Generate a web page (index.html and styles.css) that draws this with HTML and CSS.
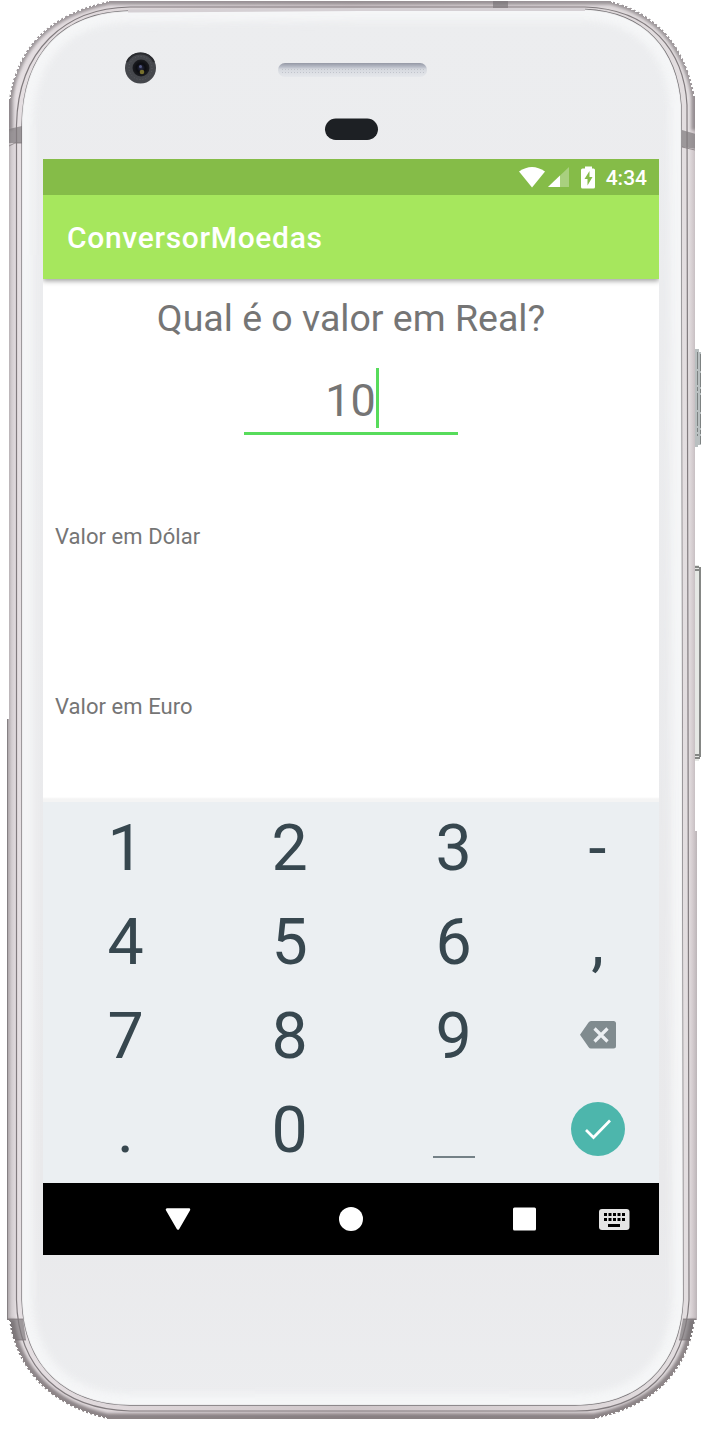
FILE: index.html
```
<!DOCTYPE html>
<html lang="pt-BR">
<head>
<meta charset="utf-8">
<title>ConversorMoedas</title>
<link rel="stylesheet" href="styles.css">
</head>
<body>
<div class="phone">
  <svg class="phone-body" width="705" height="1429" viewBox="0 0 705 1429" aria-hidden="true">
    <defs>
      <linearGradient id="metal" x1="7" x2="697" y1="0" y2="0" gradientUnits="userSpaceOnUse">
        <stop offset="0" stop-color="#a59fa2"/><stop offset=".007" stop-color="#d3cdd0"/><stop offset=".014" stop-color="#e5dfe2"/>
        <stop offset=".5" stop-color="#cfc6c9"/><stop offset=".988" stop-color="#e3dee0"/><stop offset=".994" stop-color="#d3cbce"/><stop offset="1" stop-color="#bcb5b8"/>
      </linearGradient>
      <linearGradient id="face" x1="0" x2="0" y1="0" y2="1">
        <stop offset="0" stop-color="#ecedef"/><stop offset=".85" stop-color="#e9e9eb"/><stop offset="1" stop-color="#ecedef"/>
      </linearGradient>
      <linearGradient id="slot" x1="0" x2="0" y1="0" y2="1">
        <stop offset="0" stop-color="#9498a5"/><stop offset=".28" stop-color="#b9bdc8"/><stop offset=".45" stop-color="#d6d9df"/><stop offset="1" stop-color="#e6e8ec"/>
      </linearGradient>
      <pattern id="mesh" width="3" height="3" patternUnits="userSpaceOnUse"><path d="M0 0h1v1h-1z" fill="#b5bac2" opacity=".7"/></pattern>
      <radialGradient id="lens"><stop offset="0" stop-color="#2b2d48"/><stop offset=".5" stop-color="#0c0d12"/><stop offset="1" stop-color="#1b1c20"/></radialGradient>
      <filter id="soft" x="-5%" y="-5%" width="110%" height="110%"><feGaussianBlur stdDeviation="4"/></filter>
      <filter id="rimsoft" x="-5%" y="-5%" width="110%" height="110%"><feGaussianBlur stdDeviation="1.6"/></filter>
      <path id="shell" d="M109 1H611C660 14 686 48 695 97V831H697V1320H695C688 1372 655 1406 595 1419H107C50 1406 16 1370 9 1320H7V719H9V99C17 48 47 14 109 1Z"/>
      <path id="glass" d="M130 11C200 9.500 500 9 585 9.500C645 12 677 50 681 105L683 1300C680 1368 638 1405 575 1405H130C66 1404 24 1367 22 1300V125C23 52 64 12 130 11Z"/>
      <clipPath id="shellclip"><use href="#shell"/></clipPath>
      <clipPath id="glassclip"><use href="#glass"/></clipPath>
    </defs>
    <g shape-rendering="crispEdges">
      <path d="M695 349h4v3h2v93h-3v2h-3z" fill="#b9bfc0"/>
      <path d="M697.500 352v84M700.500 354v90" stroke="#7d8282" stroke-dasharray="17 2 14 2 4 2"/>
      <path d="M695 565h4v2h2v190h-2v4h-4z" fill="#e5e7e4"/>
      <path d="M695 566.500h4M695 569.500h4M695 754.500h4M695 757.500h5M700 567v190" stroke="#858785" stroke-width="2"/>
      <use href="#shell" fill="url(#metal)"/>
    </g>
    <g clip-path="url(#shellclip)">
      <path d="M9 130V99C17 48 47 14 109 1H611C660 14 686 48 695 97V130" fill="none" stroke="#777174" stroke-width="7" opacity=".65" filter="url(#rimsoft)"/>
      <path d="M9 1320C16 1370 50 1406 107 1419H595C655 1406 688 1372 695 1320" fill="none" stroke="#70676b" stroke-width="11" opacity=".75" filter="url(#rimsoft)"/>
      <path d="M7.500 719V1320" stroke="#858083"/>
      <path d="M9 129L22 126V143H9zM682 130L696 134V149L682 147zM493 1H508V9H493zM8 1319H23L26 1340H9zM683 1319H696V1340H679z" fill="#777174" opacity=".65"/>
      <path d="M22 143H15L9 146M682 147L695 150M8 1319H23M11 1340H26M683 1319H696M679 1340H693" stroke="#777174" fill="none" opacity=".7"/>
    </g>
    <path d="M9 99C17 48 47 14 109 1M611 1C660 14 686 48 695 97M695 1320C688 1372 655 1406 595 1419M107 1419C50 1406 16 1370 9 1320" fill="none" stroke="#fff" stroke-width="2.500" stroke-dasharray="2.200 2.200" shape-rendering="crispEdges"/>
    <path d="M130 7H585C650 9 684 50 687 105L689 1300C685 1370 642 1411 575 1411H130C63 1409 18 1370 16.500 1300V125C18 50 65 8 130 7Z" fill="none" stroke="#817b7e" stroke-width="1.200"/>
    <use href="#glass" fill="url(#face)" stroke="#777477" stroke-width="1.300"/>
    <g clip-path="url(#glassclip)"><use href="#glass" fill="none" stroke="#f6f7f8" stroke-width="22" opacity=".9" filter="url(#soft)"/></g>
    <path d="M128 11C200 9.500 500 9 585 9.500" stroke="#d5d0d4" stroke-width="3" fill="none"/>
    <circle cx="140.500" cy="68" r="15.500" fill="#45474c"/>
    <path d="M127 62A15 15 0 0 1 154 62" stroke="#2b2c30" stroke-width="2" fill="none"/>
    <circle cx="140.500" cy="68" r="11.500" fill="none" stroke="#5b5d62" stroke-dasharray="1 2"/>
    <circle cx="141" cy="68" r="8.500" fill="url(#lens)"/>
    <circle cx="140.500" cy="66.500" r="1.500" fill="#555b86"/>
    <circle cx="142" cy="72" r="2.300" fill="#77702e"/>
    <rect x="278" y="63" width="149" height="14" rx="7" fill="url(#slot)"/>
    <rect x="280" y="67" width="145" height="8" rx="4" fill="url(#mesh)"/>
    <rect x="325" y="118.500" width="53" height="21.500" rx="10.750" fill="#1d2024"/>
  </svg>

  <main class="screen">
    <div class="status">
      <svg class="status-icons" width="84" height="24" viewBox="0 0 84 24">
        <path d="M1 5.500Q14-3.500 27 5.500L14 21.500Z" fill="#fff"/>
        <path d="M51 1V21H30Z" fill="#fff" opacity=".3"/>
        <path d="M42 9.500V21H30Z" fill="#fff"/>
        <path d="M67 0.500h7v2h1.500q1.500 0 1.500 1.500v17q0 1.500-1.500 1.500h-11q-1.500 0-1.500-1.500v-17q0-1.500 1.500-1.500h2.500z" fill="#fff"/>
        <path d="M71.500 5l-5 8h3v6.500l5-8.500h-3z" fill="#85bc48"/>
      </svg>
      <span class="clock">4:34</span>
    </div>
    <header class="appbar">ConversorMoedas</header>
    <section class="content">
      <h1 class="question">Qual é o valor em Real?</h1>
      <div class="field"><span class="value">10</span><i class="caret"></i></div>
      <p class="label label-dollar">Valor em Dólar</p>
      <p class="label label-euro">Valor em Euro</p>
    </section>
    <section class="keypad">
      <span>1</span><span>2</span><span>3</span><span>-</span>
      <span>4</span><span>5</span><span>6</span><span>,</span>
      <span>7</span><span>8</span><span>9</span>
      <span class="icon-key"><svg width="36" height="28" viewBox="0 0 36 28"><path d="M11 0H33.500Q36 0 36 2.500V25Q36 27.500 33.500 27.500H11Q9.500 27.500 8.500 26L0 13.750L8.500 1.500Q9.500 0 11 0Z" fill="#808b8f"/><path d="M14.500 7.500L27.500 20.500M27.500 7.500L14.500 20.500" stroke="#ebeff2" stroke-width="3.200"/></svg></span>
      <span>.</span><span>0</span><span><i class="space"></i></span>
      <span class="icon-key"><svg width="54" height="54" viewBox="0 0 54 54"><circle cx="27" cy="27" r="27" fill="#4db6ac"/><path d="M15 28L22.500 35.500L39 18.500" stroke="#fff" stroke-width="2.700" fill="none"/></svg></span>
    </section>
    <nav class="navbar">
      <svg width="616" height="72" viewBox="0 0 616 72">
        <path d="M124 26.500H146L135 45.500Z" fill="#fff" stroke="#fff" stroke-width="2.500" stroke-linejoin="round"/>
        <circle cx="308" cy="36" r="12" fill="#fff"/>
        <rect x="470" y="24.500" width="23" height="23" rx="1.500" fill="#fff"/>
        <rect x="556" y="26" width="30.500" height="21" rx="3" fill="#e5e5e5"/>
        <path d="M561 31.500H583M561 36.500H583" stroke="#000" stroke-width="3" stroke-dasharray="3 1.500"/>
        <path d="M565 42.500H577" stroke="#000" stroke-width="3"/>
      </svg>
    </nav>
  </main>
</div>
</body>
</html>
```
FILE: styles.css
```
* { box-sizing: border-box; }
body { margin: 0; background: #fff; font-family: Roboto, "Liberation Sans", sans-serif; }
.phone { position: relative; width: 705px; height: 1429px; padding: 159px 46px 0 43px; overflow: hidden; }
.phone-body { position: absolute; inset: 0; }
.screen { position: relative; width: 616px; height: 1096px; display: flex; flex-direction: column; background: #fff; }
.status { height: 36px; display: flex; align-items: center; justify-content: flex-end; gap: 4px; padding-right: 12px; background: #85bc48; color: #fff; font-size: 21px; font-weight: 500; }
.status-icons { margin-top: 1px; }
.clock { line-height: 36px; padding-top: 2px; }
.appbar { height: 84px; padding-left: 24px; line-height: 86px; background: #a6e75d; color: #fff; font-size: 30px; font-weight: 500; letter-spacing: .67px; box-shadow: 0 2px 5px rgba(0, 0, 0, .38); clip-path: inset(0 0 -12px 0); z-index: 1; }
.content { height: 523px; display: flex; flex-direction: column; align-items: center; color: #757575; background: linear-gradient(#fff 518px, #f4f4f4 520px, #f4f4f4); }
.question { margin: 16px 0 0; font-size: 37.5px; line-height: 46px; font-weight: 400; }
.field { width: 214px; height: 67px; margin-top: 27px; display: flex; justify-content: center; align-items: flex-start; border-bottom: 3px solid #57dc5b; font-size: 45px; line-height: 66px; }
.caret { width: 3px; height: 60px; margin-right: -2px; background: #57dc5b; }
.label { align-self: flex-start; margin: 0 0 0 12px; font-size: 22px; line-height: 26px; letter-spacing: .05px; }
.label-dollar { margin-top: 89px; }
.label-euro { margin-top: 144px; }
.keypad { height: 381px; display: grid; grid-template: repeat(4, 94px) / 164px 164px 164px 124px; background: #ebeff2; color: #37474f; font-size: 64.5px; line-height: 92px; }
.keypad span { display: flex; align-items: center; justify-content: center; height: 92px; padding-left: 1px; }
.keypad .icon-key { height: 90px; }
.space { width: 42px; height: 2px; margin-top: 54px; background: #748187; }
.navbar { height: 72px; background: #000; }
.navbar svg { display: block; }
```
